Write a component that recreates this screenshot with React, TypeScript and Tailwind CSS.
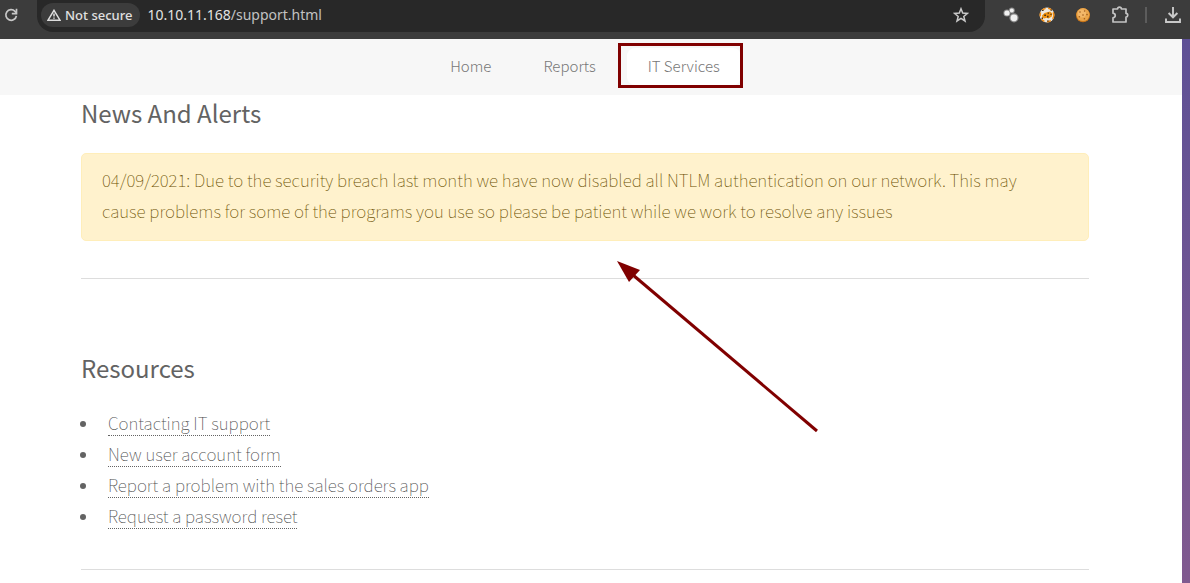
import React from "react";

const navItems = [
  { label: "Home", active: false },
  { label: "Reports", active: false },
  { label: "IT Services", active: true },
];

const resources = [
  "Contacting IT support",
  "New user account form",
  "Report a problem with the sales orders app",
  "Request a password reset",
];

function ReloadIcon() {
  return (
    <svg viewBox="0 0 14 14" className="size-[14px]" fill="none" stroke="#c7c7c7" strokeWidth="1.7">
      <path d="M12.4 7.8A5.3 5.3 0 1 1 11 3.3L12.4 4.8" />
      <path d="M12.5 .8v4.8H7.8" />
    </svg>
  );
}

function WarningIcon() {
  return (
    <svg viewBox="0 0 14 12" className="h-3 w-[14px]" fill="none" stroke="#dedede" strokeWidth="1.5">
      <path d="M7 1.3 13 11.2H1Z" />
      <path d="M7 4.6v3M7 8.6v1.2" />
    </svg>
  );
}

function StarIcon() {
  return (
    <svg viewBox="0 0 16 16" className="size-4" fill="none" stroke="#c9c9c9" strokeWidth="1.5">
      <path d="m8 1.8 1.7 4.3 4.7.3-3.6 3 1.2 4.6L8 11.4 4 14l1.2-4.6-3.6-3 4.7-.3Z" />
    </svg>
  );
}

function DotsIcon() {
  return (
    <svg viewBox="0 0 16 16" className="size-4">
      <g fill="#8c8c8c">
        <circle cx="4" cy="6" r="3.6" />
        <circle cx="8.8" cy="3.6" r="3" />
        <circle cx="11" cy="10.8" r="4.6" />
      </g>
      <g fill="#f0f0f0">
        <circle cx="4" cy="6" r="2.6" />
        <circle cx="8.8" cy="3.6" r="2" />
        <circle cx="11" cy="10.8" r="3.4" />
      </g>
    </svg>
  );
}

function CookieEditorIcon() {
  return (
    <svg viewBox="0 0 16 16" className="size-4">
      <circle cx="8" cy="8" r="7.4" fill="#ece8e0" />
      <circle cx="8" cy="8" r="6.8" fill="none" stroke="#f08a10" strokeWidth="1.4" strokeDasharray="4 2.6" />
      <path d="M3 8.5 5.5 6l5.5-1.4 2.4 1.8-.6 3-3.2 2.2-2.2-.8-2 .6L3.4 11Z" fill="#f0920f" />
      <path d="M5.2 7.4h1.8v1.6H5.2zM8 8.8h1.6v1.6H8zM8.6 5.4h1.4v1.4H8.6zM11.4 6.8h1.2v1.2h-1.2zM2.6 10.6h1.4v1.4H2.6zM3 3h1.6v1H3zM11.5 2.6h1.4v1.2h-1.4zM8 13.6h1.8v1H8z" fill="#4d3316" />
    </svg>
  );
}

function CookieIcon() {
  return (
    <svg viewBox="0 0 16 16" className="size-4">
      <circle cx="8" cy="8.2" r="7" fill="#c97518" />
      <circle cx="8" cy="7.6" r="6.5" fill="#eaa64c" />
      <circle cx="7" cy="6.4" r="4" fill="#f3b869" />
      <g fill="#a05c1c">
        <circle cx="5" cy="5" r=".8" />
        <circle cx="9.6" cy="4" r=".8" />
        <circle cx="8" cy="8" r=".8" />
        <circle cx="12" cy="7.6" r=".8" />
        <circle cx="4.4" cy="9.8" r=".8" />
        <circle cx="9.4" cy="11.8" r=".8" />
      </g>
    </svg>
  );
}

function PuzzleIcon() {
  return (
    <svg viewBox="0 0 18 18" className="size-[18px]" fill="none" stroke="#c4c4c4" strokeWidth="1.7" strokeLinejoin="round">
      <path d="M2 3h4.6c.1-2.4 3.7-2.4 3.8 0H15v4.4c2.3.1 2.3 3.5 0 3.6V16H2v-4.2c3-.6 3-4 0-4.6Z" />
    </svg>
  );
}

function DownloadIcon() {
  return (
    <svg viewBox="0 0 18 18" className="size-[18px]" fill="none" stroke="#c9c9c9" strokeWidth="1.9">
      <path d="M9 1v10M4.6 7 9 11.3 13.4 7M2 12.5V16h14v-3.5" />
    </svg>
  );
}

function BrowserBar() {
  return (
    <header className="flex h-[39px] items-start bg-[#3c3c3c] font-['Noto_Sans',sans-serif] text-sm">
      <button aria-label="Reload" className="ml-1 flex h-[30px] w-[33px] items-center">
        <ReloadIcon />
      </button>
      <div className="flex h-8 flex-1 items-start rounded-b-2xl bg-[#282828] pr-4 pl-1">
        <button className="mt-[3px] flex h-6 items-center gap-1 rounded-full bg-[#3c3c3c] pr-2 pl-[6px] text-[13px] font-medium text-[#e0e0e0]">
          <WarningIcon />
          Not secure
        </button>
        <div className="ml-[7px] flex h-[30px] flex-1 items-center text-[#e3e3e3]">
          10.10.11.168<span className="text-[#c2c2c2]">/support.html</span>
        </div>
        <button aria-label="Bookmark this page" className="flex h-[30px] items-center">
          <StarIcon />
        </button>
      </div>
      <div className="flex h-[30px] items-center pr-2 pl-[18px]">
        <button aria-label="Dots extension"><DotsIcon /></button>
        <button aria-label="Cookie editor" className="ml-5"><CookieEditorIcon /></button>
        <button aria-label="Cookies" className="ml-5"><CookieIcon /></button>
        <button aria-label="Extensions" className="ml-5"><PuzzleIcon /></button>
        <span className="ml-4 h-4 w-[2px] bg-[#5c5c5c]" />
        <button aria-label="Downloads" className="ml-[17px]"><DownloadIcon /></button>
      </div>
    </header>
  );
}

function SiteNav() {
  return (
    <nav className="flex h-14 justify-center gap-[10px] bg-[#f7f7f7] pt-[9px] pr-3 text-[15px] font-light text-[#777777]">
      {navItems.map((item) => (
        <a
          key={item.label}
          href="#"
          className={
            item.active
              ? "relative flex h-[37px] items-center rounded-lg bg-white px-[21px]"
              : "flex h-[37px] items-center px-[21px]"
          }
        >
          {item.label}
          {item.active && (
            <span className="absolute -top-[5px] -right-[2px] -bottom-[3px] -left-[9px] border-3 border-[#800000]" />
          )}
        </a>
      ))}
    </nav>
  );
}

function Arrow() {
  return (
    <svg viewBox="0 0 202 172" className="pointer-events-none absolute top-[166px] left-[536px] h-[172px] w-[202px]">
      <path d="M16 14 200 170" stroke="#800000" strokeWidth="3" />
      <path d="M0 0 23 9 12 21Z" fill="#800000" />
    </svg>
  );
}

export default function App() {
  return (
    <div className="flex min-h-screen flex-col">
      <BrowserBar />
      <div className="flex-1 bg-linear-to-b from-[#5e5095] to-[#80598f] pr-2">
        <div className="min-h-[544px] bg-white font-['Noto_Sans_CJK_SC',sans-serif] text-[#636363]">
          <SiteNav />
          <main className="pr-[93px] pl-[81px] text-[17px] leading-[31px] font-thin">
            <section className="relative border-b border-[#dddddd] pb-[37px]">
              <h2 className="pb-[22px] text-2xl leading-9 font-normal">News And Alerts</h2>
              <p className="rounded-[5px] border border-[#ffeeba] bg-[#fff2cd] pt-[10px] pr-12 pb-[14px] pl-5 text-[#6b5000]">
                04/09/2021: Due to the security breach last month we have now disabled all NTLM authentication on our
                network. This may cause problems for some of the programs you use so please be patient while we work to
                resolve any issues
              </p>
              <Arrow />
            </section>
            <section className="border-b border-[#dddddd] pt-[71px] pb-[37px]">
              <h2 className="pb-[22px] text-2xl leading-9 font-normal">Resources</h2>
              <ul>
                {resources.map((name) => (
                  <li key={name} className="flex h-[31px] items-center gap-[22px]">
                    <span className="-ml-px size-[6px] rounded-full bg-[#636363]" />
                    <a href="#" className="border-b border-dotted border-[#636363] leading-6 text-[#4c4c4c]">
                      {name}
                    </a>
                  </li>
                ))}
              </ul>
            </section>
          </main>
        </div>
      </div>
    </div>
  );
}
